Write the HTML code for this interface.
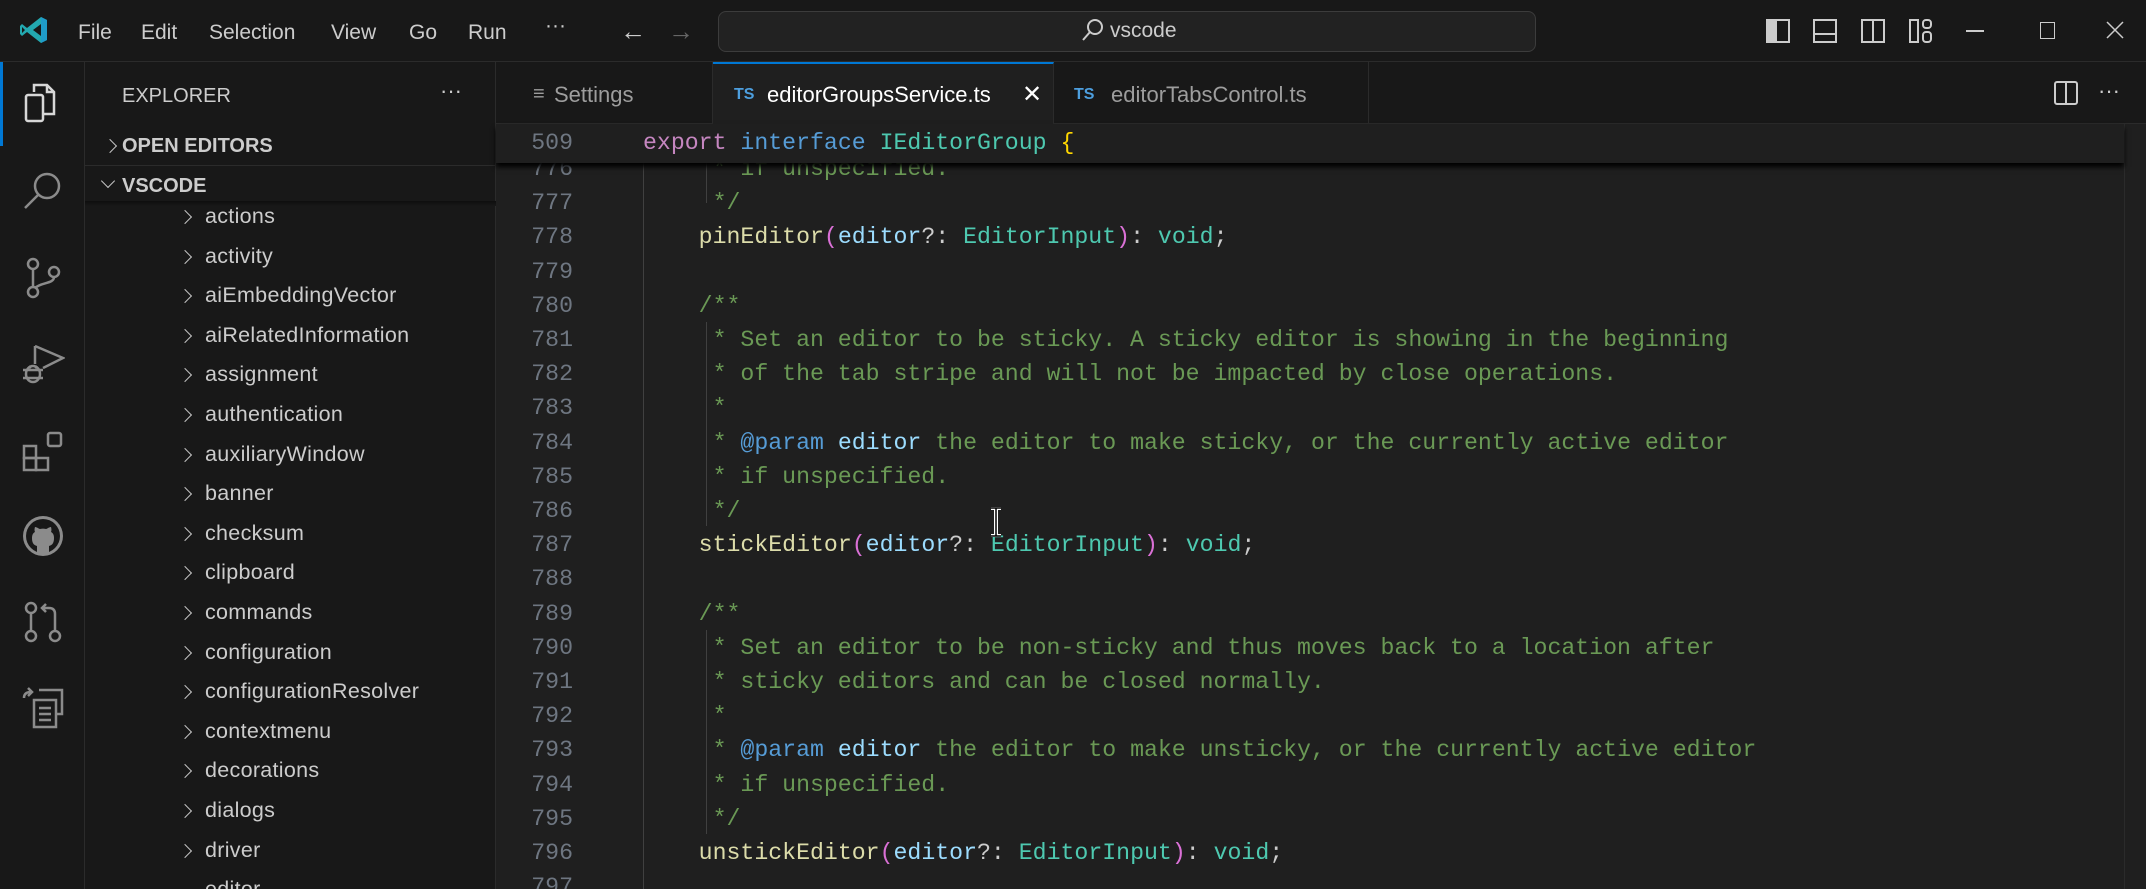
<!DOCTYPE html>
<html><head><meta charset="utf-8"><style>
*{margin:0;padding:0;box-sizing:border-box}
html,body{width:2146px;height:889px;overflow:hidden}
body{background:#1f1f1f;font-family:"Liberation Sans",sans-serif;color:#ccc;position:relative}
#root{position:absolute;left:0;top:0;width:2146px;height:889px;overflow:hidden}
.abs{position:absolute}
#title{left:0;top:0;width:2146px;height:62px;background:#181818;border-bottom:1px solid #2b2b2b}
.menu{top:21px;font-size:21px;color:#cccccc}
#act{left:0;top:62px;width:85px;height:827px;background:#181818;border-right:1px solid #2b2b2b}
#side{left:85px;top:62px;width:411px;height:827px;background:#181818;border-right:1px solid #2b2b2b}
.item{position:absolute;left:120px;font-size:21.5px;color:#cccccc;letter-spacing:.3px}
.chev{position:absolute;left:100px;width:10px;height:10px;border-right:1.6px solid #c5c5c5;border-top:1.6px solid #c5c5c5;transform:rotate(45deg)}
#tabs{left:496px;top:62px;width:1650px;height:62px;background:#181818;border-bottom:1px solid #2b2b2b}
.tab{position:absolute;top:0;height:62px;border-right:1px solid #2b2b2b;font-size:22px;line-height:66px;color:#9d9d9d}
.ln{position:absolute;left:496px;width:77px;text-align:right;color:#6e7681;font-family:"Liberation Mono",monospace;font-size:23.2px;line-height:34.2px;height:34.2px}
.tx{position:absolute;left:643px;color:#cccccc;font-family:"Liberation Mono",monospace;font-size:23.2px;white-space:pre;line-height:34.2px;height:34.2px}
.c{color:#6a9955}.k{color:#c586c0}.b{color:#569cd6}.t{color:#4ec9b0}.f{color:#dcdcaa}.p{color:#9cdcfe}.y{color:#ffd700}.m{color:#da70d6}
</style></head><body><div id="root">
<div id="title" class="abs">
<svg class="abs" style="left:19px;top:15px" width="30" height="30" viewBox="0 0 30 30"><path d="M22 2 L28 5 V25 L22 28 L8 17 L3 21 L1 19 V11 L3 9 L8 13 Z M22 9 L14 15 L22 21 Z M3 12 V18 L6 15 Z" fill="#23a9b0"/><path d="M22 2 L28 5 V25 L22 28 Z" fill="#1f9cc9"/></svg>
<div class="abs menu" style="left:78px">File</div>
<div class="abs menu" style="left:141px">Edit</div>
<div class="abs menu" style="left:209px">Selection</div>
<div class="abs menu" style="left:331px">View</div>
<div class="abs menu" style="left:409px">Go</div>
<div class="abs menu" style="left:468px">Run</div>
<div class="abs menu" style="left:545px;top:14px">···</div>
<div class="abs" style="left:620px;top:16px;font-size:26px;color:#ccc">←</div>
<div class="abs" style="left:668px;top:16px;font-size:26px;color:#666">→</div>
<div class="abs" style="left:718px;top:11px;width:818px;height:41px;border:1px solid #3c3c3c;border-radius:8px;background:#222"></div>
<svg class="abs" style="left:1080px;top:17px" width="26" height="26" viewBox="0 0 26 26"><circle cx="15" cy="10" r="7" fill="none" stroke="#ccc" stroke-width="2"/><path d="M10 15 L3 23" stroke="#ccc" stroke-width="2"/></svg>
<div class="abs" style="left:1110px;top:19px;font-size:21px;color:#ccc">vscode</div>
<svg class="abs" style="left:1766px;top:19px" width="180" height="26" viewBox="0 0 180 26" fill="none" stroke="#ccc" stroke-width="2"><rect x="1" y="1" width="22" height="22"/><rect x="2" y="2" width="8" height="20" fill="#ccc"/><rect x="48" y="1" width="22" height="22"/><path d="M48 15 H70"/><rect x="96" y="1" width="22" height="22"/><path d="M107 1 V23"/><rect x="144" y="1" width="8" height="22"/><rect x="157" y="1" width="8" height="8" rx="3"/><rect x="157" y="13" width="8" height="10" rx="3"/></svg>
<div class="abs" style="left:1966px;top:30px;width:18px;height:1.5px;background:#ccc"></div>
<div class="abs" style="left:2040px;top:22px;width:15px;height:17px;border:1.5px solid #ccc"></div>
<svg class="abs" style="left:2106px;top:21px" width="18" height="18"><path d="M1 1 L17 17 M17 1 L1 17" stroke="#ccc" stroke-width="1.5"/></svg>
</div>

<div id="act" class="abs">
<div class="abs" style="left:0;top:0;width:3px;height:84px;background:#0078d4"></div>
<svg class="abs" style="left:21px;top:20px" width="44" height="44" viewBox="0 0 44 44" fill="none" stroke="#d7d7d7" stroke-width="2.5"><path d="M13 10 V3 H26 L33 10 V32 H22"/><path d="M26 3 V10 H33"/><rect x="5" y="13" width="17" height="26" rx="2"/></svg>
<svg class="abs" style="left:21px;top:108px" width="44" height="44" viewBox="0 0 44 44" fill="none" stroke="#8b8b8b" stroke-width="2.5"><circle cx="26" cy="16" r="12"/><path d="M17 25 L4 38"/></svg>
<svg class="abs" style="left:21px;top:194px" width="44" height="44" viewBox="0 0 44 44" fill="none" stroke="#8b8b8b" stroke-width="2.5"><circle cx="12" cy="8" r="5"/><circle cx="12" cy="36" r="5"/><circle cx="33" cy="16" r="5"/><path d="M12 13 V31 M33 21 C33 28 20 26 14 32"/></svg>
<svg class="abs" style="left:21px;top:280px" width="44" height="44" viewBox="0 0 44 44" fill="none" stroke="#8b8b8b" stroke-width="2.5"><path d="M14 4 V22 M14 4 L42 16 L22 26"/><ellipse cx="12" cy="32" rx="7" ry="8"/><path d="M2 28 H22 M2 36 H22 M8 24 L10 26 M16 24 L14 26"/></svg>
<svg class="abs" style="left:21px;top:366px" width="44" height="44" viewBox="0 0 44 44" fill="none" stroke="#8b8b8b" stroke-width="2.5"><rect x="3" y="18" width="12" height="12"/><rect x="3" y="30" width="12" height="12"/><rect x="15" y="30" width="12" height="12"/><rect x="27" y="5" width="13" height="13" rx="2"/></svg>
<svg class="abs" style="left:21px;top:452px" width="44" height="44" viewBox="0 0 44 44"><circle cx="22" cy="22" r="20" fill="#8b8b8b"/><circle cx="22" cy="22" r="17" fill="#181818"/><path d="M16 40 V32 C12 31 11 28 11 24 C11 21 12 19 14 18 C13 16 14 13 14 13 C16 13 18 15 19 15 C21 14.5 23 14.5 25 15 C26 15 28 13 30 13 C30 13 31 16 30 18 C32 19 33 21 33 24 C33 28 32 31 28 32 V40 Z" fill="#8b8b8b"/></svg>
<svg class="abs" style="left:21px;top:538px" width="44" height="44" viewBox="0 0 44 44" fill="none" stroke="#8b8b8b" stroke-width="2.5"><circle cx="10" cy="8" r="5"/><circle cx="10" cy="36" r="5"/><circle cx="34" cy="36" r="5"/><path d="M10 13 V31 M34 31 V14 Q34 8 28 8 H22 M25 4 L21 8 L25 12"/></svg>
<svg class="abs" style="left:21px;top:624px" width="44" height="44" viewBox="0 0 44 44" fill="none" stroke="#8b8b8b" stroke-width="2.5"><path d="M3 12 Q3 6 10 6 M7 2 L11 6 L7 10 M18 4 H41 V28 H36"/><rect x="13" y="14" width="22" height="27"/><path d="M18 22 H30 M18 28 H30 M18 34 H30"/></svg>
</div>

<div id="side" class="abs">
<div class="abs" style="left:37px;top:23px;font-size:20px;color:#ccc">EXPLORER</div>
<div class="abs" style="left:355px;top:16px;font-size:22px;color:#ccc">···</div>
<div class="chev" style="left:20px;top:79px"></div>
<div class="abs" style="left:37px;top:73px;font-size:20px;font-weight:bold;color:#ccc">OPEN EDITORS</div>
<div class="abs" style="left:0;top:103px;width:411px;height:1px;background:#2b2b2b"></div>
<div class="chev" style="left:18px;top:114px;transform:rotate(135deg)"></div>
<div class="abs" style="left:37px;top:113px;font-size:20px;font-weight:bold;color:#ccc">VSCODE</div>
<div class="abs" style="left:0;top:139px;width:411px;height:5px;background:linear-gradient(#0e0e0e,#181818)"></div>
</div>
<div id="tree"></div>

<div id="tabs" class="abs">
<div class="tab" style="left:0;width:217px"><span style="position:absolute;left:37px;top:-1px;font-size:20px">≡</span><span style="position:absolute;left:58px">Settings</span></div>
<div class="tab" style="left:217px;width:341px;background:#1f1f1f;border-top:2px solid #0078d4;color:#fff;line-height:62px"><span style="position:absolute;left:21px;font-size:16px;color:#4d9fdf;font-weight:bold">TS</span><span style="position:absolute;left:54px">editorGroupsService.ts</span><span style="position:absolute;left:309px;font-size:24px">✕</span></div>
<div class="tab" style="left:558px;width:315px"><span style="position:absolute;left:20px;font-size:16px;color:#4d9fdf;font-weight:bold">TS</span><span style="position:absolute;left:57px">editorTabsControl.ts</span></div>
<svg class="abs" style="left:1558px;top:19px" width="24" height="24" fill="none" stroke="#ccc" stroke-width="2"><rect x="1" y="1" width="22" height="22" rx="2"/><path d="M12 1 V23"/></svg>
<div class="abs" style="left:1602px;top:16px;font-size:22px;color:#ccc">···</div>
</div>

<div class="abs" style="left:2124px;top:124px;width:22px;height:765px;background:#1f1f1f;border-left:1px solid #2b2b2b"></div>

<div id="code" class="abs" style="left:0;top:0;width:2124px;height:889px;overflow:hidden"></div>

<div class="abs" style="left:496px;top:124px;width:1628px;height:39px;background:#1f1f1f;box-shadow:0 4px 5px #000"></div>
<div class="ln" style="top:126px">509</div>
<div class="tx" style="top:126px"><span class="k">export</span> <span class="b">interface</span> <span class="t">IEditorGroup</span> <span class="y">{</span></div>

<svg class="abs" style="left:988px;top:507px" width="16" height="30"><path d="M3 1 H13 M8 1 V29 M3 29 H13" stroke="#fff" stroke-width="4"/><path d="M3 1 H13 M8 1 V29 M3 29 H13" stroke="#000" stroke-width="1.5"/></svg>
</div>
<script>
const items=["actions","activity","aiEmbeddingVector","aiRelatedInformation","assignment","authentication","auxiliaryWindow","banner","checksum","clipboard","commands","configuration","configurationResolver","contextmenu","decorations","dialogs","driver","editor"];
let h="";items.forEach((s,i)=>{const y=218+i*39.6;const last=i==items.length-1;
h+=`<div class="chev" style="left:180px;top:${y-6}px;${last?'transform:rotate(135deg)':''}"></div><div class="item" style="left:205px;top:${y-14}px">${s}</div>`});
document.getElementById('tree').innerHTML=`<div class="abs" style="left:85px;top:206px;width:410px;height:683px;overflow:hidden"><div style="position:absolute;left:-85px;top:-206px;width:600px;height:889px">${h}</div></div>`;
const L=[
['776','     <span class="c">* if unspecified.</span>'],
['777','     <span class="c">*/</span>'],
['778','    <span class="f">pinEditor</span><span class="m">(</span><span class="p">editor</span>?: <span class="t">EditorInput</span><span class="m">)</span>: <span class="t">void</span>;'],
['779',''],
['780','    <span class="c">/**</span>'],
['781','     <span class="c">* Set an editor to be sticky. A sticky editor is showing in the beginning</span>'],
['782','     <span class="c">* of the tab stripe and will not be impacted by close operations.</span>'],
['783','     <span class="c">*</span>'],
['784','     <span class="c">* </span><span class="b">@param</span> <span class="p">editor</span><span class="c"> the editor to make sticky, or the currently active editor</span>'],
['785','     <span class="c">* if unspecified.</span>'],
['786','     <span class="c">*/</span>'],
['787','    <span class="f">stickEditor</span><span class="m">(</span><span class="p">editor</span>?: <span class="t">EditorInput</span><span class="m">)</span>: <span class="t">void</span>;'],
['788',''],
['789','    <span class="c">/**</span>'],
['790','     <span class="c">* Set an editor to be non-sticky and thus moves back to a location after</span>'],
['791','     <span class="c">* sticky editors and can be closed normally.</span>'],
['792','     <span class="c">*</span>'],
['793','     <span class="c">* </span><span class="b">@param</span> <span class="p">editor</span><span class="c"> the editor to make unsticky, or the currently active editor</span>'],
['794','     <span class="c">* if unspecified.</span>'],
['795','     <span class="c">*/</span>'],
['796','    <span class="f">unstickEditor</span><span class="m">(</span><span class="p">editor</span>?: <span class="t">EditorInput</span><span class="m">)</span>: <span class="t">void</span>;'],
['797','']];
let c=`<div class="abs" style="left:643px;top:124px;width:1px;height:765px;background:#404040"></div>`;
c+=`<div class="abs" style="left:706px;top:150px;width:1px;height:53px;background:#404040"></div>`;
c+=`<div class="abs" style="left:706px;top:322px;width:1px;height:204px;background:#404040"></div>`;
c+=`<div class="abs" style="left:706px;top:630px;width:1px;height:204px;background:#404040"></div>`;
L.forEach((l,i)=>{const t=152+i*34.2;c+=`<div class="ln" style="top:${t}px">${l[0]}</div><div class="tx" style="top:${t}px">${l[1]}</div>`});
document.getElementById('code').innerHTML=c;
</script>
</body></html>
